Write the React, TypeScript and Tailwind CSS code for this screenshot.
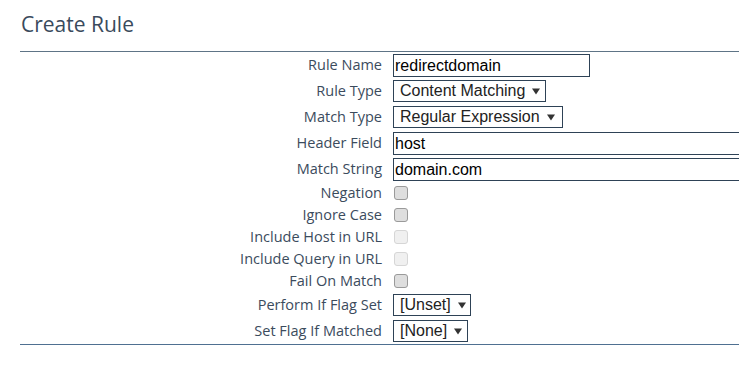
import React from "react";

const labelFont = { fontFamily: '"Open Sans", "Noto Sans", sans-serif' };

function Label({ children }: { children: React.ReactNode }) {
  return (
    <div className="w-[373px] shrink-0 pr-[11px] text-right text-[14.5px] text-[#3b4b5d]" style={labelFont}>
      {children}
    </div>
  );
}

function TextInput({ value, wide }: { value: string; wide?: boolean }) {
  return (
    <div
      className={`h-[23px] shrink-0 border border-[#2e4256] bg-white pl-[1px] text-[16px] leading-[21px] text-black font-['Liberation_Sans',Arial,sans-serif] ${
        wide ? "w-[400px]" : "w-[197px]"
      }`}
    >
      {value}
    </div>
  );
}

function Select({ value, width }: { value: string; width: string }) {
  return (
    <div
      className={`flex h-[22px] shrink-0 items-center border border-[#2e4256] bg-white pl-[6px] text-[16px] leading-[20px] text-[#222] font-['Liberation_Sans',Arial,sans-serif] ${width}`}
    >
      <span>{value}</span>
      <svg className="ml-[7px] mt-[1px]" width="8" height="7" viewBox="0 0 8 7">
        <path d="M0 0.5 L8 0.5 L4 6.5 Z" fill="#333" />
      </svg>
    </div>
  );
}

function Checkbox({ disabled }: { disabled?: boolean }) {
  return (
    <div
      className={`ml-[1px] h-[14px] w-[14px] rounded-[3px] border ${
        disabled ? "border-[#d6d6d6] bg-[#f0f0f0]" : "border-[#9a9a9a] bg-[#dedede]"
      }`}
    />
  );
}

export default function App() {
  return (
    <div className="min-h-[392px] w-[739px] overflow-hidden bg-white pl-[20px]">
      <div className="flex h-[51px] items-start pt-[10px]">
        <h1 className="pl-[1px] text-[21px] leading-[28px] text-[#3a4a5c]" style={labelFont}>
          Create Rule
        </h1>
      </div>
      <div className="h-px bg-[#5e7486]" />
      <div className="flex flex-col">
        <div className="flex h-[26px] items-center">
          <Label>Rule Name</Label>
          <TextInput value="redirectdomain" />
        </div>
        <div className="flex h-[26px] items-center">
          <Label>Rule Type</Label>
          <Select value="Content Matching" width="w-[153px]" />
        </div>
        <div className="flex h-[26px] items-center">
          <Label>Match Type</Label>
          <Select value="Regular Expression" width="w-[170px]" />
        </div>
        <div className="flex h-[26px] items-center">
          <Label>Header Field</Label>
          <TextInput value="host" wide />
        </div>
        <div className="flex h-[26px] items-center">
          <Label>Match String</Label>
          <TextInput value="domain.com" wide />
        </div>
        <div className="flex h-[22px] items-center">
          <Label>Negation</Label>
          <Checkbox />
        </div>
        <div className="flex h-[22px] items-center">
          <Label>Ignore Case</Label>
          <Checkbox />
        </div>
        <div className="flex h-[22px] items-center">
          <Label>Include Host in URL</Label>
          <Checkbox disabled />
        </div>
        <div className="flex h-[22px] items-center">
          <Label>Include Query in URL</Label>
          <Checkbox disabled />
        </div>
        <div className="flex h-[22px] items-center">
          <Label>Fail On Match</Label>
          <Checkbox />
        </div>
        <div className="flex h-[26px] items-center">
          <Label>Perform If Flag Set</Label>
          <Select value="[Unset]" width="w-[78px]" />
        </div>
        <div className="flex h-[26px] items-center">
          <Label>Set Flag If Matched</Label>
          <Select value="[None]" width="w-[75px]" />
        </div>
      </div>
      <div className="h-px bg-[#4f7091]" />
    </div>
  );
}
